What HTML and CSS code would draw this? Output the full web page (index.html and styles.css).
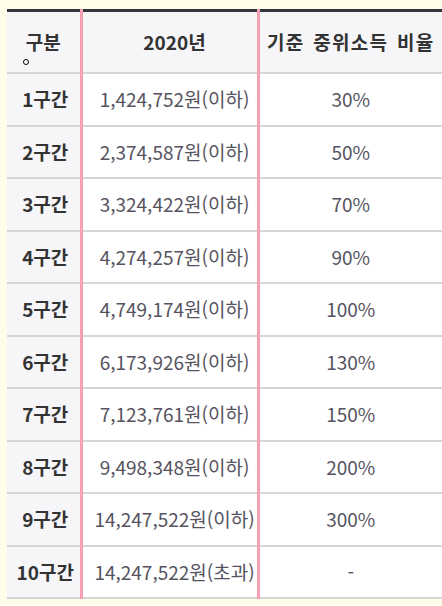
FILE: index.html
```html
<!DOCTYPE html>
<html lang="ko">
<head>
<meta charset="utf-8">
<link rel="stylesheet" href="styles.css">
</head>
<body>
<div class="wrap">
<table class="tbl">
<colgroup><col class="c1"><col class="c2"><col class="c3"></colgroup>
<thead>
<tr><th>구분</th><th class="mid">2020년</th><th>기준 중위소득 비율</th></tr>
</thead>
<tbody>
<tr><th>1구간</th><td class="mid">1,424,752원(이하)</td><td>30%</td></tr>
<tr><th>2구간</th><td class="mid">2,374,587원(이하)</td><td>50%</td></tr>
<tr><th>3구간</th><td class="mid">3,324,422원(이하)</td><td>70%</td></tr>
<tr><th>4구간</th><td class="mid">4,274,257원(이하)</td><td>90%</td></tr>
<tr><th>5구간</th><td class="mid">4,749,174원(이하)</td><td>100%</td></tr>
<tr><th>6구간</th><td class="mid">6,173,926원(이하)</td><td>130%</td></tr>
<tr><th>7구간</th><td class="mid">7,123,761원(이하)</td><td>150%</td></tr>
<tr><th>8구간</th><td class="mid">9,498,348원(이하)</td><td>200%</td></tr>
<tr><th>9구간</th><td class="mid">14,247,522원(이하)</td><td>300%</td></tr>
<tr><th>10구간</th><td class="mid">14,247,522원(초과)</td><td>-</td></tr>
</tbody>
</table>
<span class="cursor"></span>
</div>
</body>
</html>
```
FILE: styles.css
```css
html, body {
  margin: 0;
  padding: 0;
  background: #fdfdea;
}
body {
  padding: 9px 0 0 7px;
  font-family: "Noto Sans CJK KR", "Noto Sans", sans-serif;
}
.wrap {
  position: relative;
}
.tbl {
  border-collapse: collapse;
  table-layout: fixed;
  width: 435px;
  border-top: 3px solid #34363d;
  background: #fff;
}
.c1 { width: 74px; }
.c2 { width: 177px; }
.c3 { width: 184px; }
.tbl th, .tbl td {
  padding: 0;
  text-align: center;
  border-bottom: 2px solid #d6d6d6;
  font-size: 19px;
  line-height: 24px;
  white-space: nowrap;
}
.tbl thead th {
  height: 59px;
  background: #f6f6f9;
  color: #333;
  font-weight: bold;
  padding-bottom: 1px;
}
.tbl thead th:last-child {
  letter-spacing: 1.3px;
  word-spacing: 2px;
}
.tbl tbody th {
  height: 50.5px;
  background: #f6f6f9;
  color: #333;
  font-weight: bold;
  padding-left: 4px;
}
.tbl td {
  height: 50.5px;
  color: #555360;
  font-weight: normal;
}
.tbl .mid {
  border-left: 3px solid #f7a0b4;
  border-right: 3px solid #f7a0b4;
  padding-left: 10px;
}
.cursor {
  position: absolute;
  left: 16px;
  top: 50px;
  width: 4px;
  height: 4px;
  border: 1px solid #000;
  border-radius: 50%;
  background: #fff;
}
```
